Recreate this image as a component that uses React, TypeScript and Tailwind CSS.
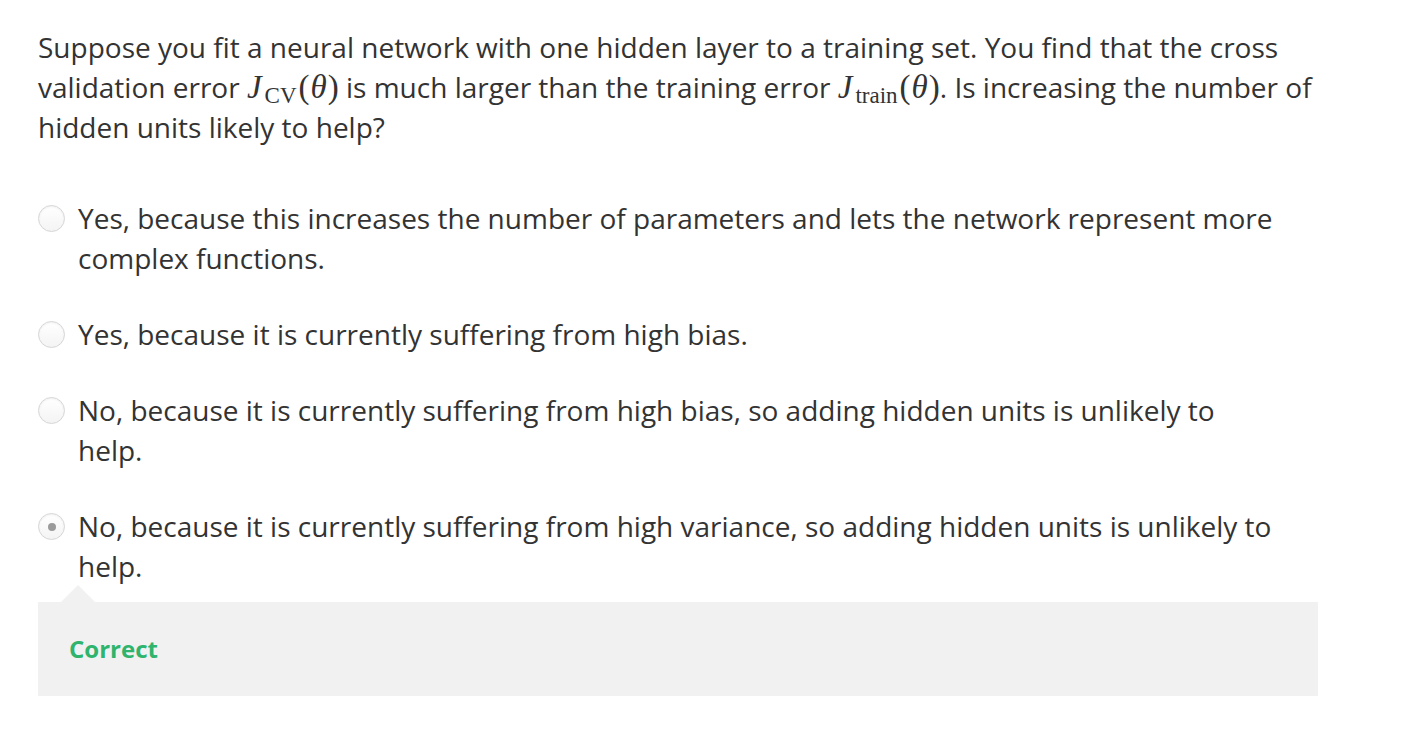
const options = [
  "Yes, because this increases the number of parameters and lets the network represent more complex functions.",
  "Yes, because it is currently suffering from high bias.",
  "No, because it is currently suffering from high bias, so adding hidden units is unlikely to help.",
  "No, because it is currently suffering from high variance, so adding hidden units is unlikely to help.",
];

const Radio = ({ checked }: { checked: boolean }) => (
  <span className="mt-[7px] w-[27px] h-[27px] shrink-0 rounded-full border border-[#d6d6d6] bg-gradient-to-b from-white to-[#f4f4f4] shadow-[inset_0_1px_2px_rgba(0,0,0,0.06)] flex items-center justify-center">
    {checked && <span className="w-[8px] h-[8px] rounded-full bg-[#9b9b9b]" />}
  </span>
);

const Math = ({ sub }: { sub: string }) => (
  <span className="whitespace-nowrap font-['Liberation_Serif',serif] text-[33px] leading-[0]">
    <i>J</i>
    <span className="relative top-[5px] text-[23px] ml-[3px] mr-[2px]">{sub}</span>
    (<i className="mx-[1px]">θ</i>)
  </span>
);

export default function App() {
  return (
    <main className="bg-white min-h-screen font-['Open_Sans',sans-serif] text-[#333333] text-[28px] leading-[40px]">
      <div className="pl-[38px] pt-[27px] w-[1318px]">
        <p className="w-[1280px]">
          Suppose you fit a neural network with one hidden layer to a training set. You find that the cross
          validation error <Math sub="CV" /> is much larger than the training error <Math sub="train" />. Is
          increasing the number of hidden units likely to help?
        </p>

        <div className="mt-[51px] flex flex-col gap-[36px]">
          {options.map((text, i) => (
            <label key={i} className="flex gap-[13px] items-start">
              <Radio checked={i === 3} />
              <span className="w-[1200px]">{text}</span>
            </label>
          ))}
        </div>

        <div className="relative mt-[16px] w-[1280px] h-[94px] bg-[#f1f1f1] flex items-center pl-[31px]">
          <span className="absolute left-[23px] top-[-17px] w-0 h-0 border-l-[17px] border-r-[17px] border-b-[17px] border-l-transparent border-r-transparent border-b-[#f1f1f1]" />
          <span className="text-[#2fb46e] font-bold text-[24px]">Correct</span>
        </div>
      </div>
    </main>
  );
}
